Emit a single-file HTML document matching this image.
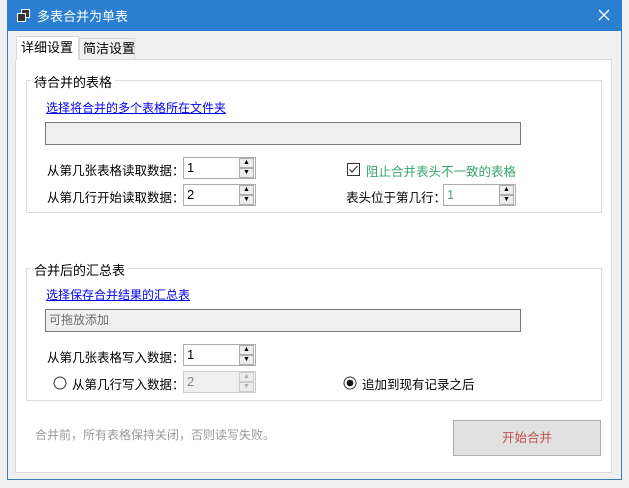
<!DOCTYPE html>
<html><head><meta charset="utf-8"><style>
*{box-sizing:border-box;margin:0;padding:0}
body{width:629px;height:488px;background:#f0f0f0;position:relative;overflow:hidden;font-family:"Liberation Sans","Noto Sans CJK SC",sans-serif;font-size:12px;color:#000}
.a{position:absolute;white-space:nowrap}
#win{left:7px;top:0;width:615px;height:480px;border:1px solid #3b7cc0;background:#f0f0f0}
#title{left:7px;top:0;width:615px;height:31px;background:#2b7fd1;color:#fff;font-size:13px}
#panel{left:15px;top:59px;width:597px;height:414px;background:#fff;border:1px solid #d9d9d9}
.tab{border:1px solid #d9d9d9;border-bottom:none;height:23px;line-height:22px;padding-left:4px;font-size:13px}
.grp{border:1px solid #dcdcdc}
.gt{background:#fff;padding:0 3px;font-size:13px}
.link{color:#0000ee;text-decoration:underline;font-size:12px}
.tb{border:1px solid #7a7a7a;background:#f0f0f0}
.sp{border:1px solid #adadad;background:#fff;font-size:13px;padding-left:3px;line-height:20px}
.sb{position:absolute;right:1px;width:15px;height:10px;border:1px solid #adadad;background:#ececec;font-size:7px;line-height:8px;text-align:center;color:#000}
.lbl{font-size:12.5px}
</style></head><body>
<div id="win" class="a"></div>
<div id="title" class="a">
 <svg class="a" style="left:10px;top:9px" width="13" height="13"><rect x="4.5" y="0.5" width="8" height="8" fill="#333" stroke="#fff"/><rect x="0.5" y="4.5" width="8" height="8" fill="#333" stroke="#fff"/></svg>
 <div class="a" style="left:30px;top:6px">多表合并为单表</div>
 <svg class="a" style="left:591px;top:9px" width="12" height="12"><path d="M1 1L11 11M11 1L1 11" stroke="#fff" stroke-width="1.3"/></svg>
</div>
<div id="panel" class="a"></div>
<div class="a tab" style="left:16px;top:36px;width:63px;height:24px;background:#fff">详细设置</div>
<div class="a tab" style="left:79px;top:38px;width:56px;height:21px;background:#f0f0f0;line-height:20px;padding-left:3px">简洁设置</div>

<div class="a grp" style="left:26px;top:80px;width:576px;height:133px"></div>
<div class="a gt" style="left:31px;top:72px">待合并的表格</div>
<div class="a link" style="left:46px;top:99px">选择将合并的多个表格所在文件夹</div>
<div class="a tb" style="left:45px;top:122px;width:476px;height:23px"></div>
<div class="a lbl" style="left:47px;top:160px">从第几张表格读取数据：</div>
<div class="a sp" style="left:183px;top:157px;width:73px;height:22px">1<div class="sb" style="top:0px">▲</div><div class="sb" style="top:10px">▼</div></div>
<div class="a lbl" style="left:47px;top:187px">从第几行开始读取数据：</div>
<div class="a sp" style="left:183px;top:184px;width:73px;height:22px">2<div class="sb" style="top:0px">▲</div><div class="sb" style="top:10px">▼</div></div>
<svg class="a" style="left:347px;top:163px" width="13" height="13"><rect x="0.5" y="0.5" width="12" height="12" fill="#fff" stroke="#333"/><path d="M2.5 6.5L5 9L10.5 3" fill="none" stroke="#333" stroke-width="1.2"/></svg>
<div class="a lbl" style="left:366px;top:161px;color:#3aa56c">阻止合并表头不一致的表格</div>
<div class="a lbl" style="left:346px;top:187px">表头位于第几行：</div>
<div class="a sp" style="left:443px;top:184px;width:73px;height:22px;color:#5aa07a">1<div class="sb" style="top:0px">▲</div><div class="sb" style="top:10px">▼</div></div>

<div class="a grp" style="left:26px;top:268px;width:576px;height:133px"></div>
<div class="a gt" style="left:31px;top:260px">合并后的汇总表</div>
<div class="a link" style="left:46px;top:286px">选择保存合并结果的汇总表</div>
<div class="a tb" style="left:45px;top:309px;width:476px;height:23px;color:#6d6d6d;padding-left:3px;line-height:21px">可拖放添加</div>
<div class="a lbl" style="left:47px;top:347px">从第几张表格写入数据：</div>
<div class="a sp" style="left:183px;top:344px;width:73px;height:22px">1<div class="sb" style="top:0px">▲</div><div class="sb" style="top:10px">▼</div></div>
<svg class="a" style="left:53px;top:376px" width="14" height="14"><circle cx="7" cy="7" r="6" fill="#fff" stroke="#333"/></svg>
<div class="a lbl" style="left:72px;top:374px">从第几行写入数据：</div>
<div class="a sp" style="left:183px;top:371px;width:73px;height:22px;background:#f0f0f0;border-color:#ccc;color:#888">2<div class="sb" style="top:0px;color:#aaa;border-color:#ccc">▲</div><div class="sb" style="top:10px;color:#aaa;border-color:#ccc">▼</div></div>
<svg class="a" style="left:343px;top:376px" width="14" height="14"><circle cx="7" cy="7" r="6" fill="#fff" stroke="#333"/><circle cx="7" cy="7" r="3.3" fill="#111"/></svg>
<div class="a lbl" style="left:362px;top:374px">追加到现有记录之后</div>

<div class="a" style="left:35px;top:426px;color:#999">合并前，所有表格保持关闭，否则读写失败。</div>
<div class="a" style="left:453px;top:420px;width:148px;height:36px;background:#e1e1e1;border:1px solid #adadad;color:#c0504d;text-align:center;line-height:34px;font-size:12.5px">开始合并</div>
</body></html>
